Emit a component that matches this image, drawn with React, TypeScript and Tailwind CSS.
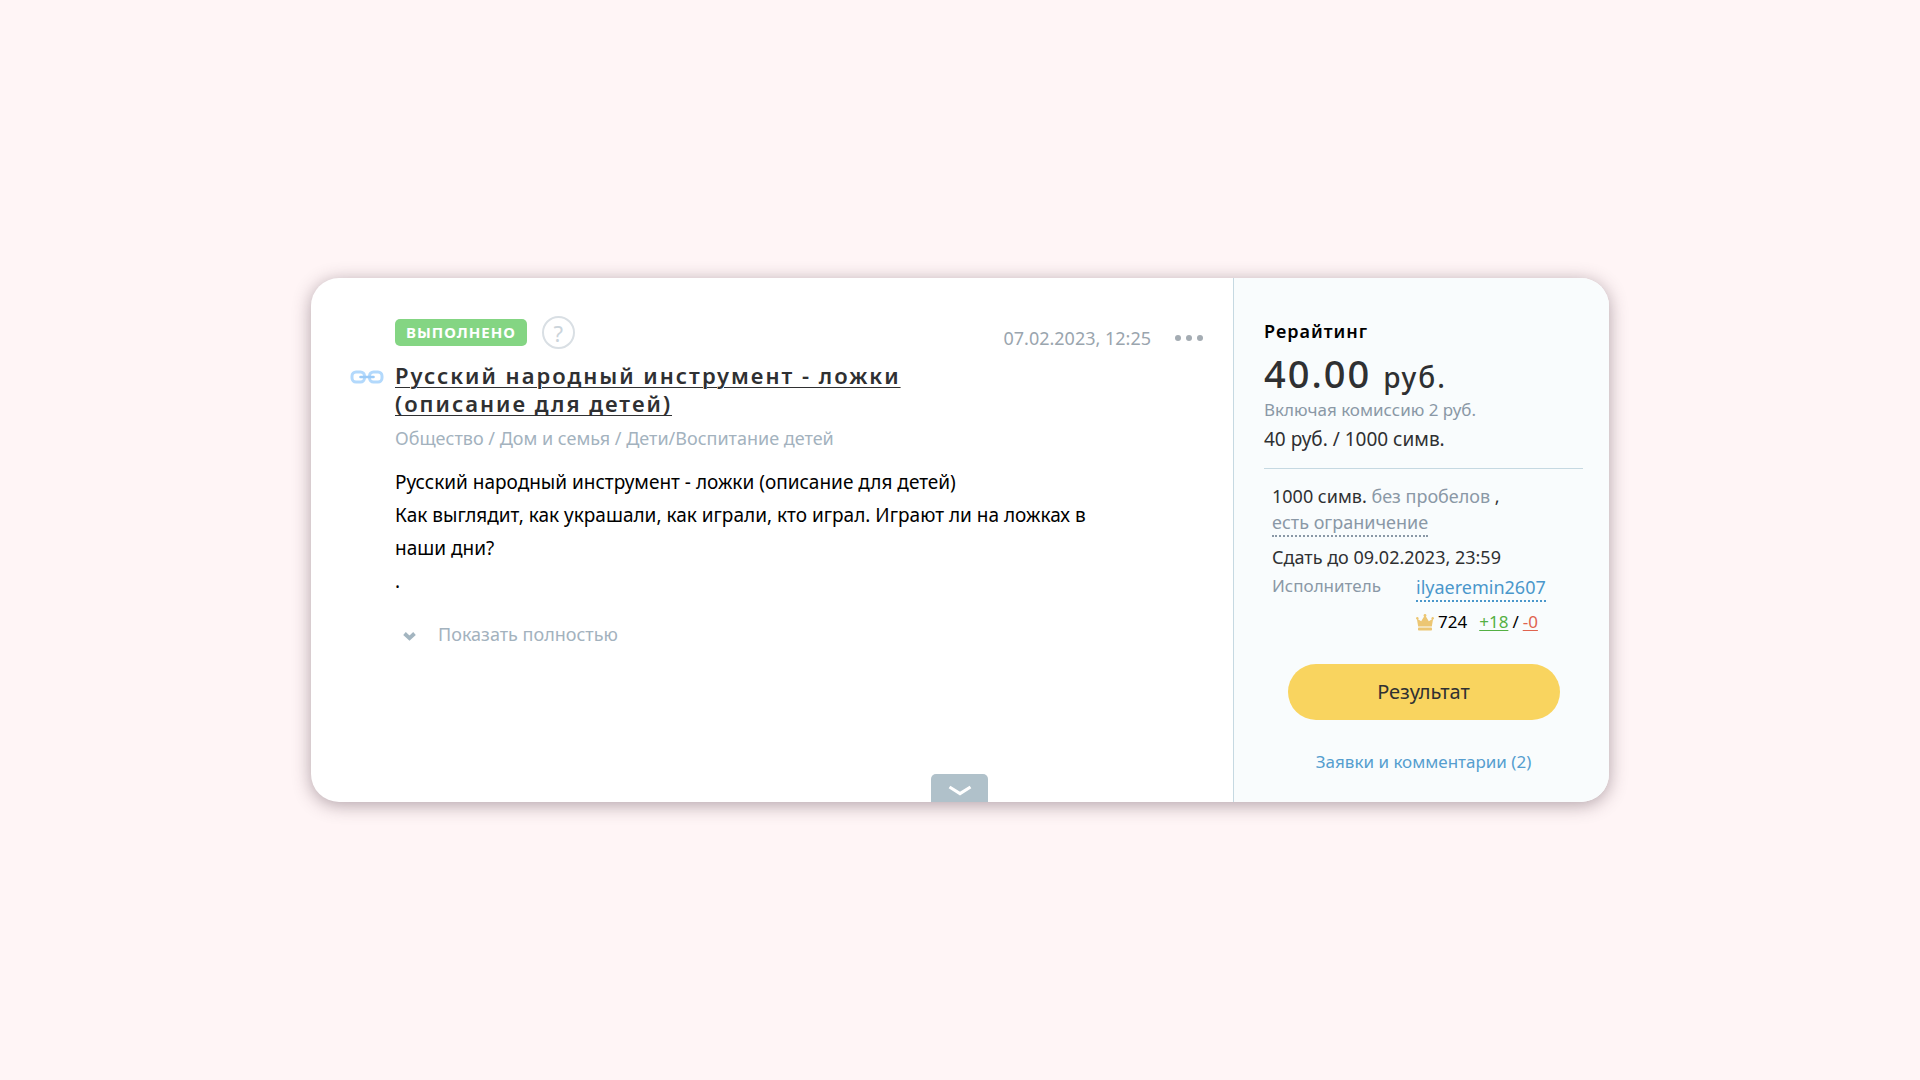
import React from "react";

function LinkIcon() {
  return (
    <svg viewBox="0 0 34 14" className="h-3.5 w-[34px]" fill="none" aria-hidden="true">
      <g stroke="#b3d9fc" strokeWidth="3">
        <rect x="2" y="2" width="12.500" height="10" rx="4" />
        <rect x="19.500" y="2" width="12.500" height="10" rx="4" />
      </g>
      <path d="M10.500 7h13" stroke="#9ccbf7" strokeWidth="2.600" strokeLinecap="round" />
    </svg>
  );
}

function CrownIcon() {
  return (
    <svg viewBox="0 0 18 17" className="h-[17px] w-[18px]" fill="#ecc673" aria-hidden="true">
      <path d="M2.200 12.500.8 4.600l4.400 2.600L9 1l3.800 6.200 4.400-2.600-1.400 7.900z" />
      <circle cx="1.300" cy="4.200" r="1.200" />
      <circle cx="9" cy="1.500" r="1.400" />
      <circle cx="16.700" cy="4.200" r="1.200" />
      <rect x="2" y="13.500" width="14" height="3" rx=".8" />
    </svg>
  );
}

export default function App() {
  return (
    <main className="flex min-h-screen items-center justify-center bg-[#fff5f6] px-6 py-10 font-['Noto_Sans',sans-serif] text-[#2f3032]">
      <article className="flex w-full max-w-[1298px] overflow-hidden rounded-[28px] bg-white shadow-[0_3px_18px_rgba(70,45,60,0.42)]">
        <section className="flex min-w-0 flex-1 flex-col pl-[39px]">
          <div className="flex justify-between pt-[38px] pr-[30px]">
            <div className="flex h-[33px] items-center gap-[15px] pl-[45px]">
              <span className="rounded-[5px] bg-[#84d583] px-[11px] text-[15px] leading-[27px] font-bold tracking-[1px] text-white">
                ВЫПОЛНЕНО
              </span>
              <button
                type="button"
                aria-label="Справка"
                className="flex size-[33px] items-center justify-center rounded-full border-2 border-[#d9dfe4] text-[22px] leading-6 text-[#cbd4db]"
              >
                ?
              </button>
            </div>
            <div className="flex items-center gap-6 pt-2.5">
              <time className="text-lg leading-6 text-[#9aa5ae]">07.02.2023, 12:25</time>
              <button type="button" aria-label="Меню" className="flex gap-[5px]">
                <span className="size-1.5 rounded-full bg-[#a4acb3]" />
                <span className="size-1.5 rounded-full bg-[#a4acb3]" />
                <span className="size-1.5 rounded-full bg-[#a4acb3]" />
              </button>
            </div>
          </div>

          <div className="mt-[11px] flex items-start gap-[11px]">
            <span className="pt-[9px]">
              <LinkIcon />
            </span>
            <h1 className="max-w-[560px] text-[22px] leading-7 font-semibold tracking-[2px]">
              <a href="#order" className="underline decoration-1 underline-offset-3">
                Русский народный инструмент - ложки (описание для детей)
              </a>
            </h1>
          </div>

          <div className="pr-[110px] pl-[45px]">
            <p className="mt-[9px] text-lg leading-6 text-[#a3b2be]">
              Общество / Дом и семья / Дети/Воспитание детей
            </p>
            <p className="mt-4 text-[19px] leading-[33px] text-black">
              Русский народный инструмент - ложки (описание для детей)
              <br />
              Как выглядит, как украшали, как играли, кто играл. Играют ли на ложках в наши дни?
              <br />.
            </p>
            <button
              type="button"
              className="mt-6 flex items-center gap-[22px] pl-2 text-lg leading-6 text-[#a3b2be]"
            >
              <svg viewBox="0 0 13 9" className="mt-1 h-[9px] w-[13px]" fill="none" aria-hidden="true">
                <path d="M1.500 1.500 6.500 6.200 11.500 1.500" stroke="#a3b5c0" strokeWidth="3.800" />
              </svg>
              Показать полностью
            </button>
          </div>

          <button
            type="button"
            aria-label="Развернуть"
            className="mt-auto ml-[581px] flex h-7 w-[57px] items-center justify-center rounded-t-[5px] bg-[#b0c1ca]"
          >
            <svg viewBox="0 0 24 12" className="mt-1.5 h-3 w-6" fill="none" aria-hidden="true">
              <path d="M1.500 2 12 8.500 22.500 2" stroke="#fff" strokeWidth="3.200" />
            </svg>
          </button>
        </section>

        <aside className="w-[376px] shrink-0 border-l border-[#c6d9e2] bg-[#f9fcfd] pt-[41px] pr-[26px] pb-7 pl-[30px]">
          <h2 className="text-lg leading-6 font-semibold tracking-[1px] text-black">Рерайтинг</h2>
          <p className="mt-[7px] text-[38px] leading-[46px] font-medium tracking-[2px]">
            40.00 <span className="text-[28px]">руб.</span>
          </p>
          <p className="text-[17px] leading-5 text-[#8a98a6]">Включая комиссию 2 руб.</p>
          <p className="mt-[7px] text-[19px] leading-6">40 руб. / 1000 симв.</p>
          <hr className="mt-[17px] border-[#c6d9e2]" />

          <div className="px-2 text-lg leading-[26px]">
            <p className="mt-3.5">
              1000 симв. <span className="text-[#8a98a6]">без пробелов</span> ,
            </p>
            <button
              type="button"
              className="block border-b-2 border-dotted border-[#8a98a6] text-[#8a98a6]"
            >
              есть ограничение
            </button>
            <p className="mt-[7px]">Сдать до 09.02.2023, 23:59</p>
            <div className="mt-1 grid grid-cols-[144px_1fr]">
              <span className="text-[17px] leading-6 text-[#8a98a6]">Исполнитель</span>
              <div>
                <a
                  href="#user"
                  className="inline-block border-b-2 border-dotted border-[#4a97cb] text-[#4a97cb]"
                >
                  ilyaeremin2607
                </a>
                <p className="mt-2 flex items-center text-[17px] leading-6 text-black">
                  <CrownIcon />
                  <span className="ml-1">724</span>
                  <a href="#plus" className="ml-3 text-[#54b043] underline underline-offset-2">
                    +18
                  </a>
                  <span className="mx-1">/</span>
                  <a href="#minus" className="text-[#e0634f] underline underline-offset-2">
                    -0
                  </a>
                </p>
              </div>
            </div>
          </div>

          <div className="flex flex-col items-center">
            <button
              type="button"
              className="mt-[30px] h-14 w-[272px] rounded-full bg-[#f9d45f] text-xl leading-6"
            >
              Результат
            </button>
            <a href="#comments" className="mt-[30px] text-[17px] leading-6 text-[#559ecf]">
              Заявки и комментарии (2)
            </a>
          </div>
        </aside>
      </article>
    </main>
  );
}
